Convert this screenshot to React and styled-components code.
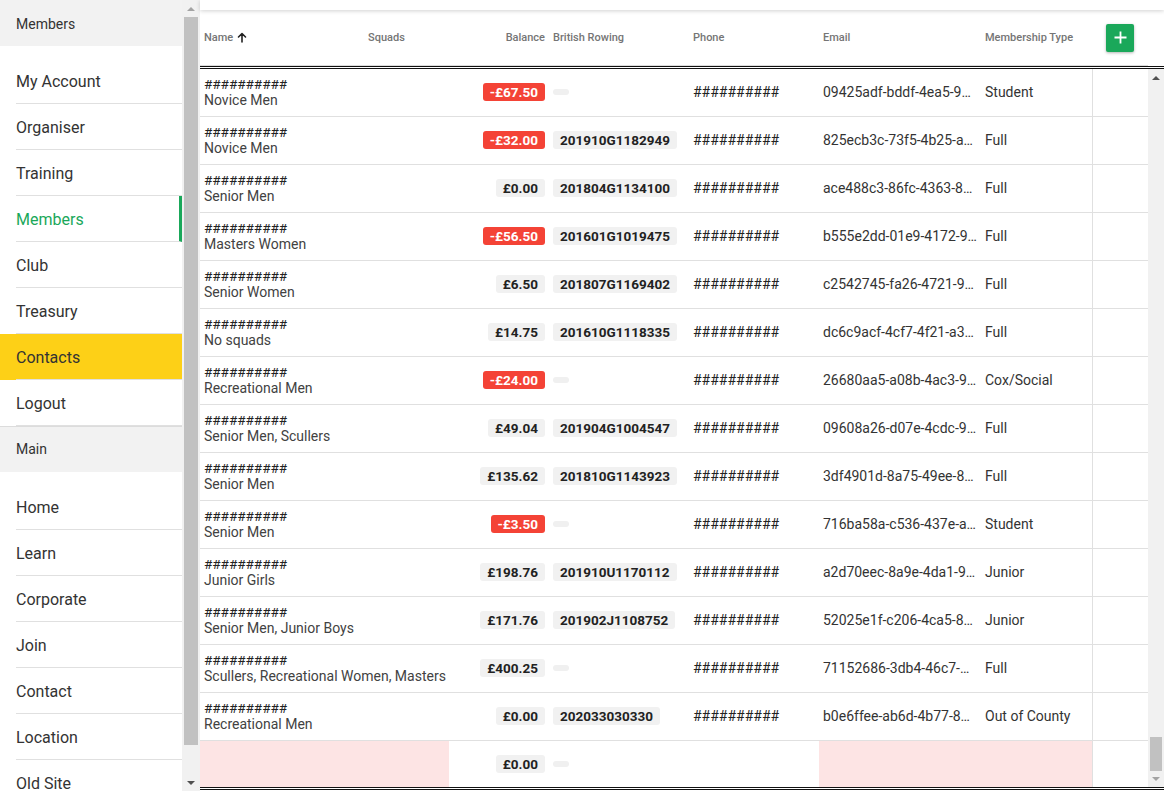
import React from 'react';
import styled, { createGlobalStyle } from 'styled-components';

const Global = createGlobalStyle`
  html, body { margin: 0; padding: 0; background: #fff; }
  body { font-family: Roboto, "Noto Sans", Arial, sans-serif; color: #333; }
  * { box-sizing: border-box; }
`;

const GREEN = '#1aa85a';
const COLS = '164px 85px 100px 140px 130px 162px 111px 56px';

const Page = styled.div`
  display: flex;
  width: 1164px;
  height: 791px;
  overflow: hidden;
`;

const Sidebar = styled.nav`
  width: 182px;
  flex: none;
  height: 100%;
  overflow: hidden;
  background: #fff;
`;

const SectionHeader = styled.div`
  height: 46px;
  display: flex;
  align-items: center;
  padding: ${p => (p.$divided ? '0 0 2px 16px' : '2px 0 0 16px')};
  font-size: 14px;
  color: #333;
  background: #f2f2f2;
  border-top: ${p => (p.$divided ? '1px solid #dcdcdc' : 'none')};
`;

const NavList = styled.ul`
  list-style: none;
  margin: 0;
  padding: 12px 0 0;
`;

const NavItem = styled.li`
  height: 46px;
  padding-left: 16px;
  background: ${p => (p.$highlight ? '#fdd017' : 'transparent')};
`;

const NavLabel = styled.div`
  height: 100%;
  display: flex;
  align-items: center;
  padding-top: 2px;
  font-size: 16px;
  color: ${p => (p.$current ? GREEN : '#333')};
  border-bottom: 1px solid #e0e0e0;
  border-right: ${p => (p.$current ? `3px solid ${GREEN}` : 'none')};
`;

const ScrollTrack = styled.div`
  width: ${p => p.$w}px;
  flex: none;
  display: flex;
  flex-direction: column;
  background: #f1f1f1;
`;

const ArrowBtn = styled.div`
  height: ${p => p.$h || 17}px;
  flex: none;
  display: flex;
  align-items: center;
  justify-content: center;
`;

const Triangle = styled.span`
  width: 0;
  height: 0;
  border-left: 4px solid transparent;
  border-right: 4px solid transparent;
  ${p => (p.$down ? 'border-top' : 'border-bottom')}: 4px solid ${p => (p.$dim ? '#a3a3a3' : '#505050')};
`;

const Thumb = styled.div`
  height: ${p => p.$h}px;
  flex: none;
  margin: 0 2px;
  background: #c1c1c1;
`;

const Spacer = styled.div`
  flex: 1;
`;

const Main = styled.main`
  flex: 1;
  min-width: 0;
  display: flex;
  flex-direction: column;
`;

const TopBar = styled.div`
  height: 10px;
  flex: none;
  background: #fff;
  position: relative;
  z-index: 1;
  box-shadow: 0 1px 4px rgba(0, 0, 0, 0.18);
`;

const HeaderWrap = styled.div`
  flex: none;
  display: flex;
  border-bottom: 3px double #111;
`;

const HeaderGrid = styled.div`
  display: grid;
  grid-template-columns: ${COLS};
  height: 56px;
  border-bottom: 1px solid #dcdcdc;
`;

const HeaderCell = styled.div`
  display: flex;
  align-items: center;
  gap: 4px;
  justify-content: ${p => (p.$right ? 'flex-end' : p.$center ? 'center' : 'flex-start')};
  padding: 0 4px;
  font-size: 11px;
  font-weight: 500;
  color: #757575;
  white-space: nowrap;
`;

const AddButton = styled.button`
  width: 28px;
  height: 28px;
  border: none;
  border-radius: 2px;
  padding: 0;
  background: ${GREEN};
  display: flex;
  align-items: center;
  justify-content: center;
  box-shadow: 0 1px 3px rgba(0, 0, 0, 0.3);
  cursor: pointer;
`;

const Body = styled.div`
  flex: 1;
  min-height: 0;
  display: flex;
  overflow: hidden;
`;

const Rows = styled.div`
  width: 948px;
  flex: none;
  overflow: hidden;
`;

const Row = styled.div`
  display: grid;
  grid-template-columns: ${COLS};
  height: 48px;
  border-bottom: 1px solid #e0e0e0;
`;

const Cell = styled.div`
  min-width: 0;
  display: flex;
  align-items: center;
  justify-content: ${p => (p.$right ? 'flex-end' : 'flex-start')};
  padding: 0 4px 1px;
  white-space: nowrap;
  overflow: hidden;
  font-size: 14px;
  color: #333;
  background: ${p => (p.$invalid ? '#fde4e4' : 'transparent')};
`;

const NameCell = styled.div`
  display: flex;
  flex-direction: column;
  padding: 7px 4px 0;
  white-space: nowrap;
  overflow: visible;
  background: ${p => (p.$invalid ? '#fde4e4' : 'transparent')};
`;

const Hashes = styled.span`
  font-size: 13.5px;
  line-height: 16px;
  color: #222;
`;

const Squads = styled.span`
  font-size: 14px;
  line-height: 16px;
  color: #424242;
`;

const Badge = styled.span`
  display: inline-block;
  padding: 2px 7px;
  border-radius: 3px;
  font-size: 13.5px;
  font-weight: 700;
  line-height: 14px;
  color: ${p => (p.$neg ? '#fff' : '#222')};
  background: ${p => (p.$neg ? '#f44336' : '#f1f1f1')};
`;

const EmptyBadge = styled.span`
  display: inline-block;
  width: 16px;
  height: 6px;
  border-radius: 3px;
  background: #f0f0f0;
`;

const Phone = styled.span`
  font-size: 14px;
  color: #222;
`;

const ActionCell = styled.div`
  border-left: 1px solid #e0e0e0;
`;

const Footer = styled.div`
  height: 4px;
  flex: none;
  border-top: 3px double #111;
`;

const membersNav = ['My Account', 'Organiser', 'Training', 'Members', 'Club', 'Treasury', 'Contacts', 'Logout'];
const mainNav = ['Home', 'Learn', 'Corporate', 'Join', 'Contact', 'Location', 'Old Site'];

const rows = [
  ['Novice Men', '-£67.50', '', '09425adf-bddf-4ea5-9…', 'Student'],
  ['Novice Men', '-£32.00', '201910G1182949', '825ecb3c-73f5-4b25-a…', 'Full'],
  ['Senior Men', '£0.00', '201804G1134100', 'ace488c3-86fc-4363-8…', 'Full'],
  ['Masters Women', '-£56.50', '201601G1019475', 'b555e2dd-01e9-4172-9…', 'Full'],
  ['Senior Women', '£6.50', '201807G1169402', 'c2542745-fa26-4721-9…', 'Full'],
  ['No squads', '£14.75', '201610G1118335', 'dc6c9acf-4cf7-4f21-a3…', 'Full'],
  ['Recreational Men', '-£24.00', '', '26680aa5-a08b-4ac3-9…', 'Cox/Social'],
  ['Senior Men, Scullers', '£49.04', '201904G1004547', '09608a26-d07e-4cdc-9…', 'Full'],
  ['Senior Men', '£135.62', '201810G1143923', '3df4901d-8a75-49ee-8…', 'Full'],
  ['Senior Men', '-£3.50', '', '716ba58a-c536-437e-a…', 'Student'],
  ['Junior Girls', '£198.76', '201910U1170112', 'a2d70eec-8a9e-4da1-9…', 'Junior'],
  ['Senior Men, Junior Boys', '£171.76', '201902J1108752', '52025e1f-c206-4ca5-8…', 'Junior'],
  ['Scullers, Recreational Women, Masters', '£400.25', '', '71152686-3db4-46c7-…', 'Full'],
  ['Recreational Men', '£0.00', '202033030330', 'b0e6ffee-ab6d-4b77-8…', 'Out of County'],
];

const SortArrow = () => (
  <svg width="10" height="11" viewBox="0 0 10 11" fill="none" stroke="#222" strokeWidth="1.6" strokeLinecap="round" strokeLinejoin="round">
    <path d="M5 10V1.5M1.5 5L5 1.5L8.5 5" />
  </svg>
);

const PlusIcon = () => (
  <svg width="13" height="13" viewBox="0 0 13 13" stroke="#fff" strokeWidth="1.8">
    <path d="M6.5 0.5V12.5M0.5 6.5H12.5" />
  </svg>
);

const Nav = ({ items, current, highlight }) => (
  <NavList>
    {items.map(name => (
      <NavItem key={name} $highlight={name === highlight}>
        <NavLabel $current={name === current}>{name}</NavLabel>
      </NavItem>
    ))}
  </NavList>
);

export default function App() {
  return (
    <>
      <Global />
      <Page>
        <Sidebar>
          <SectionHeader>Members</SectionHeader>
          <Nav items={membersNav} current="Members" highlight="Contacts" />
          <SectionHeader $divided>Main</SectionHeader>
          <Nav items={mainNav} />
        </Sidebar>
        <ScrollTrack $w={18}>
          <ArrowBtn><Triangle $dim /></ArrowBtn>
          <Thumb $h={728} />
          <Spacer />
          <ArrowBtn><Triangle $down /></ArrowBtn>
        </ScrollTrack>
        <Main>
          <TopBar />
          <HeaderWrap>
            <HeaderGrid>
              <HeaderCell>Name <SortArrow /></HeaderCell>
              <HeaderCell>Squads</HeaderCell>
              <HeaderCell $right>Balance</HeaderCell>
              <HeaderCell>British Rowing</HeaderCell>
              <HeaderCell>Phone</HeaderCell>
              <HeaderCell>Email</HeaderCell>
              <HeaderCell>Membership Type</HeaderCell>
              <HeaderCell $center>
                <AddButton aria-label="Add member"><PlusIcon /></AddButton>
              </HeaderCell>
            </HeaderGrid>
          </HeaderWrap>
          <Body>
            <Rows>
              {rows.map(([squads, bal, br, email, type], i) => (
                <Row key={i}>
                  <NameCell>
                    <Hashes>##########</Hashes>
                    <Squads>{squads}</Squads>
                  </NameCell>
                  <Cell />
                  <Cell $right>
                    <Badge $neg={bal.startsWith('-')}>{bal}</Badge>
                  </Cell>
                  <Cell>{br ? <Badge>{br}</Badge> : <EmptyBadge />}</Cell>
                  <Cell><Phone>##########</Phone></Cell>
                  <Cell>{email}</Cell>
                  <Cell>{type}</Cell>
                  <ActionCell />
                </Row>
              ))}
              <Row>
                <NameCell $invalid />
                <Cell $invalid />
                <Cell $right><Badge>£0.00</Badge></Cell>
                <Cell><EmptyBadge /></Cell>
                <Cell />
                <Cell $invalid />
                <Cell $invalid />
                <ActionCell />
              </Row>
            </Rows>
            <ScrollTrack $w={16}>
              <ArrowBtn><Triangle /></ArrowBtn>
              <Spacer />
              <Thumb $h={34} />
              <ArrowBtn $h={16}><Triangle $down $dim /></ArrowBtn>
            </ScrollTrack>
          </Body>
          <Footer />
        </Main>
      </Page>
    </>
  );
}
